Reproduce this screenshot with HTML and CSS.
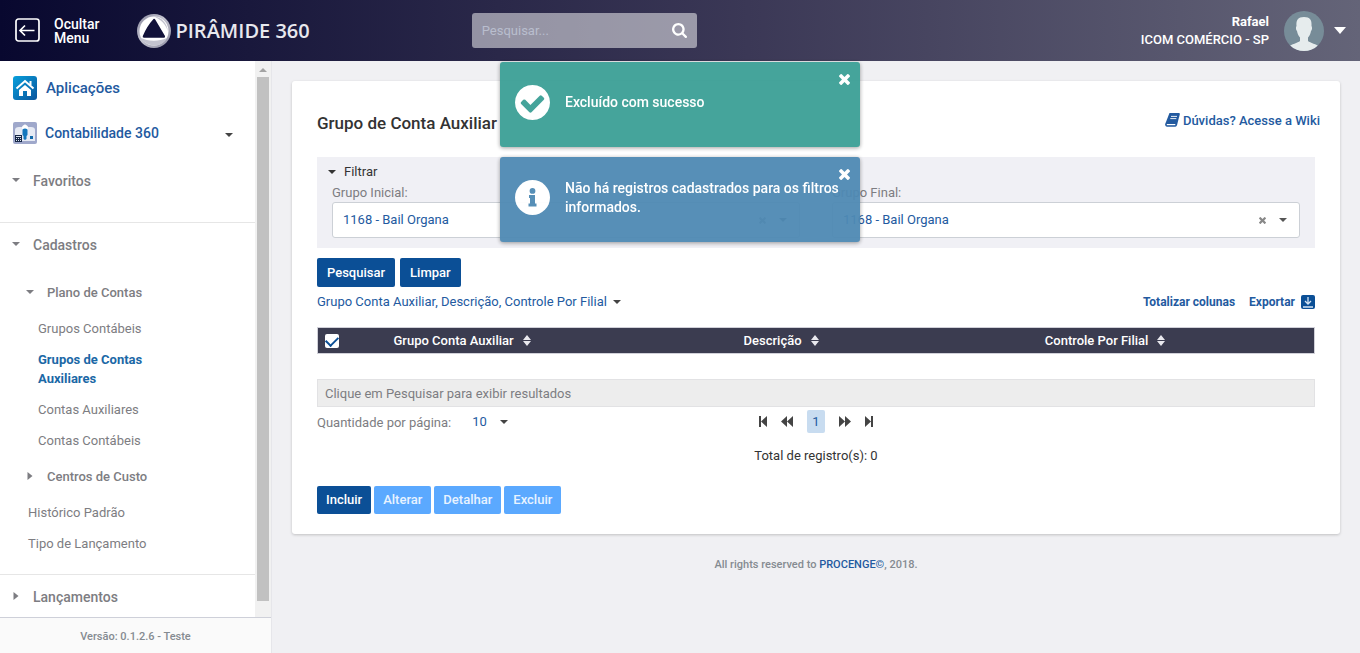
FILE: index.html
```html
<!DOCTYPE html>
<html lang="pt-BR">
<head>
<meta charset="utf-8">
<title>Pirâmide 360 - Grupo de Conta Auxiliar</title>
<link rel="stylesheet" href="styles.css">
</head>
<body>
<svg class="defs" width="0" height="0" aria-hidden="true">
  <symbol id="times" viewBox="302 366 1188 1188"><path d="M1490 1322q0 40-28 68l-136 136q-28 28-68 28t-68-28l-294-294-294 294q-28 28-68 28t-68-28l-136-136q-28-28-28-68t28-68l294-294-294-294q-28-28-28-68t28-68l136-136q28-28 68-28t68 28l294 294 294-294q28-28 68-28t68 28l136 136q28 28 28 68t-28 68l-294 294 294 294q28 28 28 68z"/></symbol>
  <symbol id="down" viewBox="0 0 8 4"><path d="M0 0h8L4 4z"/></symbol>
  <symbol id="right" viewBox="0 0 5 8"><path d="M0 0v8l5-4z"/></symbol>
  <symbol id="sort" viewBox="0 0 8 11"><path d="M0 5h8L4 0zM0 6h8l-4 5z"/></symbol>
</svg>

<header class="topbar">
  <button class="menu-toggle" type="button">
    <svg width="25" height="25" viewBox="0 0 25 25" fill="none" stroke="#fff"><rect x="1" y="1" width="23" height="22" rx="2.5" stroke-width="1.7"/><path d="M19.500 12.500h-14M10 7.500l-5 5 5 5" stroke-width="1.7"/></svg>
    <span>Ocultar<br>Menu</span>
  </button>
  <a class="brand" href="#">
    <svg width="34" height="34" viewBox="0 0 34 34">
      <defs><linearGradient id="ring" x1="0" y1="0" x2="1" y2="1"><stop offset="0" stop-color="#85859a"/><stop offset=".45" stop-color="#c4c4d0"/><stop offset="1" stop-color="#8c8ca0"/></linearGradient></defs>
      <circle cx="17" cy="17" r="17" fill="url(#ring)"/>
      <circle cx="17" cy="17" r="14.500" fill="#fff"/>
      <path d="M17 2.500c8 .5 13 7 14 15-2-7-7-12-14-15zM4 24c6 3 17 4 26 0-2 4-6 6.500-10 7.500C13 32 7 29 4 24z" fill="#c3c3cf"/>
      <path d="M16.500 5q1-.6 1.700.6l9.800 16.400q.5 1.600-1 1.800H7q-1.800-.2-1.200-1.800Q10 12 16.500 5z" fill="#12123a"/>
    </svg>
    <span>PIRÂMIDE 360</span>
  </a>
  <form class="search">
    <input type="text" placeholder="Pesquisar..." aria-label="Pesquisar">
    <button type="button" aria-label="Buscar"><svg width="15" height="15" viewBox="64 128 1664 1664" fill="#fff"><path d="M1216 832q0-185-131.500-316.500t-316.500-131.500-316.500 131.500-131.500 316.500 131.500 316.500 316.500 131.500 316.500-131.500 131.500-316.500zm512 832q0 52-38 90t-90 38q-54 0-90-38l-343-342q-179 124-399 124-143 0-273.500-55.500t-225-150-150-225-55.500-273.500 55.500-273.500 150-225 225-150 273.500-55.500 273.500 55.500 225 150 150 225 55.500 273.500q0 220-124 399l343 343q37 37 37 90z"/></svg></button>
  </form>
  <button class="user" type="button">
    <span class="user-text"><b>Rafael</b><span>ICOM COMÉRCIO - SP</span></span>
    <svg width="40" height="40" viewBox="0 0 40 40"><defs><clipPath id="face"><circle cx="20" cy="20" r="20"/></clipPath></defs><g clip-path="url(#face)"><path d="M0 0h40v40H0z" fill="#778c98"/><path d="M20 6c6 0 8 3 7.500 9 .8 1 .8 4-.5 5-.5 3-1.500 5-3 6.500V30c2 2 9 3 11 6v4H5v-4c2-3 9-4 11-6v-3.500c-1.500-1.500-2.500-3.500-3-6.500-1.300-1-1.300-4-.5-5C12 9 14 6 20 6z" fill="#e6eced"/></g></svg>
    <svg width="12" height="7" viewBox="0 0 12 7" fill="#fff"><path d="M0 0h12L6 7z"/></svg>
  </button>
</header>

<div class="layout">
  <aside class="sidebar">
    <div class="side-scroll">
      <nav class="side-nav">
        <a class="app" href="#">
          <svg width="24" height="24" viewBox="0 0 24 24"><defs><linearGradient id="home" x1="0" y1="0" x2="1" y2="1"><stop offset="0" stop-color="#08a0dc"/><stop offset="1" stop-color="#0a559d"/></linearGradient></defs><rect width="24" height="24" rx="3" fill="url(#home)"/><path d="M3.500 12.500 12 5l8.500 7.500M17.500 9V5" fill="none" stroke="#fff" stroke-width="2"/><path d="M6 14l6-5 6 5v6h-4v-5h-4v5H6z" fill="#fff"/></svg>
          <span>Aplicações</span>
        </a>
        <a class="app module" href="#">
          <svg width="24" height="22" viewBox="0 0 24 22"><rect width="24" height="22" rx="2" fill="#9fa8cb"/><path d="M2 8q0-3 4-3h3l3-3 3 3h3q4 0 4 3v11H2z" fill="#e6eaf4"/><circle cx="12" cy="6" r="3" fill="#fff"/><path d="M9.500 7.500Q12 5.500 14.500 7.500V13l-1 1v3l-1.500 1-1.500-1v-3l-1-1z" fill="#1477bd"/><path d="M17 14h3v3h-3z" fill="#136aab"/><path d="M2 13h7v7H2z" fill="#162746"/><path d="M3 14.500h5" stroke="#dce4f0"/><path d="M3 16.500h5M3 18.500h5" stroke="#dce4f0" stroke-dasharray="1"/></svg>
          <span>Contabilidade 360</span>
          <svg class="caret" width="8" height="4"><use href="#down"/></svg>
        </a>
        <section class="group favorites">
          <button class="head" type="button"><svg width="8" height="4"><use href="#down"/></svg>Favoritos</button>
        </section>
        <section class="group">
          <button class="head" type="button"><svg width="8" height="4"><use href="#down"/></svg>Cadastros</button>
          <div class="tree">
            <button class="subhead" type="button"><svg width="8" height="4"><use href="#down"/></svg>Plano de Contas</button>
            <div class="leaves">
              <a href="#">Grupos Contábeis</a>
              <a class="current" href="#">Grupos de Contas Auxiliares</a>
              <a href="#">Contas Auxiliares</a>
              <a href="#">Contas Contábeis</a>
            </div>
            <button class="subhead" type="button"><svg width="8" height="8"><use href="#right"/></svg>Centros de Custo</button>
            <a href="#">Histórico Padrão</a>
            <a href="#">Tipo de Lançamento</a>
          </div>
        </section>
        <section class="group">
          <button class="head" type="button"><svg width="8" height="8"><use href="#right"/></svg>Lançamentos</button>
        </section>
      </nav>
      <div class="scrollbar"><svg width="8" height="4" viewBox="0 0 8 4"><path d="M0 4h8L4 0z"/></svg><div class="thumb"></div></div>
    </div>
    <div class="version">Versão: 0.1.2.6 - Teste</div>
  </aside>

  <main class="main">
    <div class="card">
      <div class="card-head">
        <h1>Grupo de Conta Auxiliar</h1>
        <a href="#"><svg width="15" height="14" viewBox="0 0 15 14"><path d="M4.500 0H14q1 .3.800 1.200L12 12.300q-.4 1.400-1.700 1.400H1.800Q-.2 13 .2 11z" fill="#235a9f"/><path d="M6 3.400h6M5.300 5.600h6" fill="none" stroke="#fff" stroke-width=".9"/><path d="M1.800 11.600h8.500" fill="none" stroke="#fff" stroke-width="1.200"/></svg>Dúvidas? Acesse a Wiki</a>
      </div>
      <section class="filter">
        <button class="filter-head" type="button"><svg width="8" height="4"><use href="#down"/></svg>Filtrar</button>
        <div class="fields">
          <div class="field">
            <label for="ini">Grupo Inicial:</label>
            <div class="combo">
              <select id="ini"><option>1168 - Bail Organa</option></select>
              <div class="combo-icons"><button type="button" aria-label="Limpar grupo inicial"><svg width="7" height="7"><use href="#times"/></svg></button><svg width="8" height="4"><use href="#down"/></svg></div>
            </div>
          </div>
          <div class="field">
            <label for="fim">Grupo Final:</label>
            <div class="combo">
              <select id="fim"><option>1168 - Bail Organa</option></select>
              <div class="combo-icons"><button type="button" aria-label="Limpar grupo final"><svg width="7" height="7"><use href="#times"/></svg></button><svg width="8" height="4"><use href="#down"/></svg></div>
            </div>
          </div>
        </div>
      </section>
      <div class="actions wide">
        <button class="btn" type="button">Pesquisar</button>
        <button class="btn" type="button">Limpar</button>
      </div>
      <div class="tools">
        <button class="columns" type="button">Grupo Conta Auxiliar, Descrição, Controle Por Filial<svg width="8" height="4"><use href="#down"/></svg></button>
        <div class="exports">
          <a href="#">Totalizar colunas</a>
          <a href="#">Exportar<svg width="14" height="14" viewBox="0 0 14 14"><rect width="14" height="14" rx="2" fill="#0b4f96"/><path d="M7 2v7M4 6l3 3 3-3M2 12h10" fill="none" stroke="#d5e4f4" stroke-width="1.300"/></svg></a>
        </div>
      </div>
      <table class="grid">
        <colgroup><col class="c-check"><col class="c-first"><col class="c-mid"><col class="c-last"><col></colgroup>
        <thead>
          <tr>
            <th><input type="checkbox" checked aria-label="Selecionar todos"></th>
            <th>Grupo Conta Auxiliar<svg width="8" height="11"><use href="#sort"/></svg></th>
            <th>Descrição<svg width="8" height="11"><use href="#sort"/></svg></th>
            <th>Controle Por Filial<svg width="8" height="11"><use href="#sort"/></svg></th>
            <th></th>
          </tr>
        </thead>
        <tbody>
          <tr class="spacer"><td colspan="5"></td></tr>
          <tr class="empty"><td colspan="5">Clique em Pesquisar para exibir resultados</td></tr>
        </tbody>
      </table>
      <div class="paging">
        <div class="page-size">
          <label for="size">Quantidade por página:</label>
          <div class="mini"><select id="size"><option>10</option></select><svg width="8" height="4"><use href="#down"/></svg></div>
        </div>
        <div class="pager">
          <button type="button" aria-label="Primeira"><svg width="8" height="11" viewBox="0 0 8 11"><path d="M0 0h2v11H0zM8 0v11L2 5.500z"/></svg></button>
          <button type="button" aria-label="Anterior"><svg width="12" height="11" viewBox="0 0 12 11"><path d="M6 0v11L0 5.500zM12 0v11L6 5.500z"/></svg></button>
          <button class="page" type="button">1</button>
          <button type="button" aria-label="Próxima"><svg width="12" height="11" viewBox="0 0 12 11"><path d="M0 0v11l6-5.500zM6 0v11l6-5.500z"/></svg></button>
          <button type="button" aria-label="Última"><svg width="8" height="11" viewBox="0 0 8 11"><path d="M6 0h2v11H6zM0 0v11l6-5.500z"/></svg></button>
        </div>
      </div>
      <p class="total">Total de registro(s): 0</p>
      <div class="actions crud">
        <button class="btn" type="button">Incluir</button>
        <button class="btn" type="button" disabled>Alterar</button>
        <button class="btn" type="button" disabled>Detalhar</button>
        <button class="btn" type="button" disabled>Excluir</button>
      </div>
    </div>
    <footer class="credits">All rights reserved to <a href="#">PROCENGE©</a>, 2018.</footer>
  </main>
</div>

<div class="toasts">
  <div class="toast success" role="status">
    <svg width="35" height="35" viewBox="128 128 1536 1536" fill="#fff"><path d="M1412 734q0-28-18-46l-91-90q-19-19-45-19t-45 19l-408 407-226-226q-19-19-45-19t-45 19l-91 90q-18 18-18 46 0 27 18 45l362 362q19 19 45 19 27 0 46-19l543-543q18-18 18-45zm252 162q0 209-103 385.500t-279.500 279.500-385.500 103-385.500-103-279.500-279.500-103-385.500 103-385.500 279.500-279.500 385.500-103 385.500 103 279.500 279.500 103 385.500z"/></svg>
    <p>Excluído com sucesso</p>
    <button type="button" aria-label="Fechar"><svg width="11" height="11"><use href="#times"/></svg></button>
  </div>
  <div class="toast info" role="status">
    <svg width="35" height="35" viewBox="0 0 35 35"><circle cx="17.500" cy="17.500" r="17.500" fill="#fff"/><path d="M17.500 8a2.900 2.900 0 1 1 0 5.800 2.900 2.900 0 1 1 0-5.800zM14 15h6v8.500h1.500v3h-8v-3H15V18h-1z" fill="#4f8ab4"/></svg>
    <p>Não há registros cadastrados para os filtros informados.</p>
    <button type="button" aria-label="Fechar"><svg width="11" height="11"><use href="#times"/></svg></button>
  </div>
</div>
</body>
</html>
```

FILE: styles.css
```css
* { box-sizing: border-box; }
body {
  margin: 0;
  min-height: 100vh;
  display: flex;
  flex-direction: column;
  background: #f0f0f3;
  color: #333;
  font: 13px/20px Roboto, "Liberation Sans", sans-serif;
}
a { color: #235a9f; text-decoration: none; }
button, input, select { font: inherit; color: inherit; margin: 0; }
button { background: none; border: 0; padding: 0; cursor: pointer; text-align: left; }
h1, p { margin: 0; }
svg { flex: none; fill: currentColor; }
.defs { position: absolute; }

/* Top bar */
.topbar {
  display: flex;
  align-items: center;
  height: 61px;
  padding: 0 14px 0 15px;
  background: linear-gradient(90deg, #08082f 0%, #3b3856 55%, #646478 100%);
  color: #fff;
}
.topbar svg[fill="none"] { fill: none; }
.menu-toggle { display: flex; align-items: center; gap: 14px; font-size: 14px; font-weight: 500; line-height: 14px; }
.brand { display: flex; align-items: center; gap: 4px; margin-left: 38px; color: #e8e8ee; font: 600 20px/24px "Open Sans", sans-serif; }
.search {
  display: flex;
  align-items: center;
  width: 225px;
  height: 35px;
  margin-left: 162px;
  padding: 0 10px;
  border-radius: 3px;
  background: rgba(255, 255, 255, .5);
}
.search input { flex: 1; min-width: 0; padding: 0; border: 0; outline: 0; background: none; }
.search input::placeholder { color: #b9bece; opacity: 1; }
.search button { display: flex; }
.user { display: flex; align-items: center; gap: 10px; margin-left: auto; }
.user-text { display: flex; flex-direction: column; margin-right: 5px; text-align: right; font-weight: 500; line-height: 18px; }

/* Sidebar */
.layout { display: flex; flex: 1; }
.sidebar {
  display: flex;
  flex-direction: column;
  flex: none;
  width: 272px;
  height: calc(100vh - 61px);
  border-right: 1px solid #e6e6ea;
  background: #fff;
  color: #7d7d82;
}
.side-scroll { display: flex; flex: 1; min-height: 0; overflow: hidden; }
.side-nav { flex: 1; padding-top: 8px; }
.app { display: flex; align-items: center; gap: 9px; height: 38px; padding: 0 22px 0 13px; font-size: 15px; font-weight: 500; }
.module { height: 52px; gap: 8px; font-size: 14px; }
.caret { margin: 4px 0 0 auto; color: #444; }
.group { padding-bottom: 15px; border-bottom: 1px solid #e6e6e6; }
.favorites { padding-bottom: 19px; }
.head, .subhead { display: flex; align-items: center; width: 100%; font-weight: 500; }
.head svg, .subhead svg { margin-bottom: 2px; }
.head { height: 44px; padding-left: 12px; gap: 13px; font-size: 14px; }
.subhead { height: 41px; padding-left: 26px; gap: 13px; }
.tree { padding-top: 5px; }
.tree a { display: block; padding: 6px 80px 6px 28px; color: #7d7d82; line-height: 19px; }
.tree .leaves a { padding-left: 38px; }
.tree .leaves .current { color: #1b68a6; font-weight: 700; }
.scrollbar { display: flex; flex-direction: column; align-items: center; width: 16px; padding: 7px 2px 0; gap: 5px; background: #f1f1f1; color: #a3a3a3; }
.thumb { width: 12px; height: calc(100% - 25px); background: #c1c1c1; }
.version { padding: 9px 0 7px; border-top: 1px solid #ced0d9; background: #fafafa; text-align: center; font-size: 11px; font-weight: 500; line-height: 19px; color: #858b91; }

/* Content */
.main { flex: 1; min-width: 0; padding: 20px; }
.card { padding: 20px 25px; border-radius: 3px; background: #fff; box-shadow: 0 1px 3px rgba(0, 0, 0, .2); }
.card-head { display: flex; justify-content: space-between; margin: 0 -5px 12px 0; font-weight: 500; line-height: 40px; }
.card-head h1 { font-size: 17px; font-weight: 500; line-height: 44px; }
.card-head a { display: flex; align-items: center; gap: 3px; height: 40px; }
.card-head a svg { margin-bottom: 2px; }
.filter { padding: 4px 15px 10px; background: #f0f0f5; }
.filter-head { display: flex; align-items: center; gap: 8px; margin-left: -4px; line-height: 22px; }
.fields { display: grid; grid-template-columns: 1fr 1fr; gap: 32px; }
.field label { display: block; padding-top: 1px; color: #7d7d82; line-height: 18px; }
.combo { position: relative; }
.combo select {
  display: block;
  width: 100%;
  height: 36px;
  padding: 0 10px;
  appearance: none;
  border: 1px solid #ccd0d6;
  border-radius: 3px;
  background: #fff;
  color: #235a9f;
}
.combo-icons { position: absolute; inset: 0 13px 0 auto; display: flex; align-items: center; gap: 13px; color: #555; pointer-events: none; }
.combo-icons button { display: flex; color: #888; pointer-events: auto; }
.actions { display: flex; gap: 3px; }
.wide { gap: 5px; margin-top: 10px; }
.btn { height: 28px; padding: 0 10px; border-radius: 2px; background: #0b4f96; color: #fff; font-weight: 500; }
.wide .btn { height: 29px; }
.crud .btn { padding: 0 9px; }
.btn:disabled { background: #5ba9ff; color: #e8f3ff; }
.tools { display: flex; justify-content: space-between; align-items: center; padding: 5px 0 15px; }
.columns { display: flex; align-items: center; gap: 6px; color: #235a9f; }
.columns svg { color: #444; }
.exports { display: flex; gap: 14px; font-size: 12px; font-weight: 700; }
.exports a { display: flex; align-items: center; gap: 6px; }

.grid { width: 100%; border-collapse: collapse; table-layout: fixed; }
.c-check { width: 3%; }
.c-first { width: 23%; }
.c-mid { width: 41%; }
.c-last { width: 24%; }
.grid thead { border: 1px solid #d0d0d8; background: #3b3c50; color: #fff; }
.grid th { height: 26px; padding: 0; font-weight: 500; }
.grid th svg { margin-left: 9px; vertical-align: -1px; color: #e8e8ee; }
.grid th input {
  display: grid;
  place-items: center;
  width: 14px;
  height: 14px;
  margin: 0 0 0 7px;
  appearance: none;
  border-radius: 2px;
  background: #fff;
}
.grid th input:checked::before { content: ""; width: 10px; height: 6px; border: solid #0b4f96; border-width: 0 0 2px 2px; transform: translateY(-1px) rotate(-45deg); }
.spacer td { height: 26px; padding: 0; }
.empty td { height: 27px; padding: 1px 7px 0; border: 1px solid #e2e2e4; background: #ededed; color: #7d7d82; }

.paging { display: grid; grid-template-columns: 1fr auto 1fr; align-items: center; padding-top: 3px; }
.page-size { display: flex; align-items: center; gap: 21px; color: #7d7d82; }
.page-size label { padding-top: 2px; }
.mini { display: flex; align-items: center; gap: 13px; color: #444; }
.mini select { padding: 0; appearance: none; border: 0; background: none; color: #235a9f; }
.pager { display: flex; align-items: center; color: #444; }
.pager button { display: flex; margin: 0 7px; }
.pager .page { justify-content: center; width: 18px; border-radius: 2px; background: #c8dcf0; color: #235a9f; line-height: 23px; }
.total { margin: 13px 0 20px; text-align: center; }
.credits { padding-top: 21px; text-align: center; color: #858b91; font-size: 11px; font-weight: 500; }

/* Notifications float over the page */
.toasts { position: fixed; top: 62px; left: 0; right: 0; display: flex; flex-direction: column; align-items: center; gap: 10px; pointer-events: none; }
.toast {
  position: relative;
  display: flex;
  align-items: center;
  gap: 15px;
  width: 360px;
  min-height: 85px;
  padding: 15px 20px 19px 15px;
  border-radius: 3px;
  color: #fff;
  font-size: 14px;
  font-weight: 500;
  line-height: 19px;
  opacity: .95;
  box-shadow: 0 1px 4px rgba(0, 0, 0, .4);
  pointer-events: auto;
}
.toast button { position: absolute; top: 12px; right: 10px; display: flex; }
.success { background: #3ca096; }
.info { background: #4f8ab4; }
```
